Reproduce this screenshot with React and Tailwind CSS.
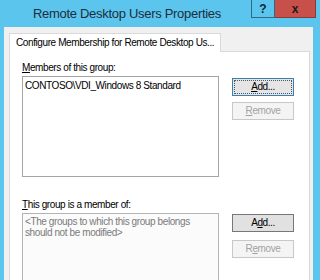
export default function App() {
  const btn = 'h-[18px] w-[62px] flex items-center justify-center text-[10px] leading-none border'

  return (
    <div className="w-[320px] h-[280px] overflow-hidden bg-[#5cc5ed] flex flex-col font-['Liberation_Sans',Arial,sans-serif]">
      {/* Title bar */}
      <div className="h-[27px] flex items-start shrink-0">
        <div className="pl-[33px] pt-[5px] text-[13px] leading-[18px] tracking-[-0.3px] text-[#1b2e40] whitespace-nowrap">
          Remote Desktop Users Properties
        </div>
        <div className="ml-auto mr-[4px] flex">
          <div className="w-[24px] h-[18px] border border-[#2f6a86] border-t-0 flex items-center justify-center text-[12px] font-bold text-[#10263a]">
            ?
          </div>
          <div className="w-[41px] h-[18px] bg-[#c7504b] border border-[#8c3a35] border-t-0 border-l-0 flex items-center justify-center text-[12px] font-bold text-[#1b1b1b]">
            x
          </div>
        </div>
      </div>

      {/* Client area */}
      <div className="flex-1 ml-[4px] mr-[7px] bg-[#f0f0f0] pl-[5px] pr-[3px] pt-[6px] flex flex-col tracking-[-0.4px]">
        {/* Tab */}
        <div className="relative z-10 -mb-px w-[212px] h-[19px] bg-white border border-b-0 border-[#d9d9d9] pl-[6px] text-[10px] leading-[17px] text-black whitespace-nowrap overflow-hidden">
          Configure Membership for Remote Desktop Us...
        </div>

        {/* Panel */}
        <div className="flex-1 bg-white border border-[#d9d9d9] pl-[12px] pt-[9px] text-[10px] text-black">
          <div className="leading-[14px]">
            <span className="underline">M</span>embers of this group:
          </div>
          <div className="mt-px flex">
            <div className="w-[197px] h-[101px] border border-[#a5a5a5] bg-white pl-[2px] pt-[2px] leading-[14px] whitespace-nowrap">
              CONTOSO\VDI_Windows 8 Standard
            </div>
            <div className="ml-[13px] pt-[2px] flex flex-col gap-[6px]">
              <div className={`${btn} bg-[#e5e5e5] border-[#3c7fb1] p-px`}>
                <div className="w-full h-full border border-dotted border-[#555] flex items-center justify-center">
                  <span><span className="underline">A</span>dd...</span>
                </div>
              </div>
              <div className={`${btn} bg-[#f4f4f4] border-[#c8c8c8] text-[#a2a2a2]`}>
                <span><span className="underline">R</span>emove</span>
              </div>
            </div>
          </div>

          <div className="mt-[21px] leading-[14px]">
            <span className="underline">T</span>his group is a member of:
          </div>
          <div className="mt-px flex">
            <div className="w-[197px] h-[80px] border border-[#b4b4b4] bg-[#fbfbfb] pl-[2px] pt-[2px] leading-[11px] text-[#7a7a7a] whitespace-nowrap">
              &lt;The groups to which this group belongs
              <br />
              should not be modified&gt;
            </div>
            <div className="ml-[13px] pt-px flex flex-col gap-[8px]">
              <div className={`${btn} bg-[#e1e1e1] border-[#777]`}>
                <span>A<span className="underline">d</span>d...</span>
              </div>
              <div className={`${btn} bg-[#f4f4f4] border-[#c8c8c8] text-[#a2a2a2]`}>
                <span>R<span className="underline">e</span>move</span>
              </div>
            </div>
          </div>
        </div>
      </div>
    </div>
  )
}
